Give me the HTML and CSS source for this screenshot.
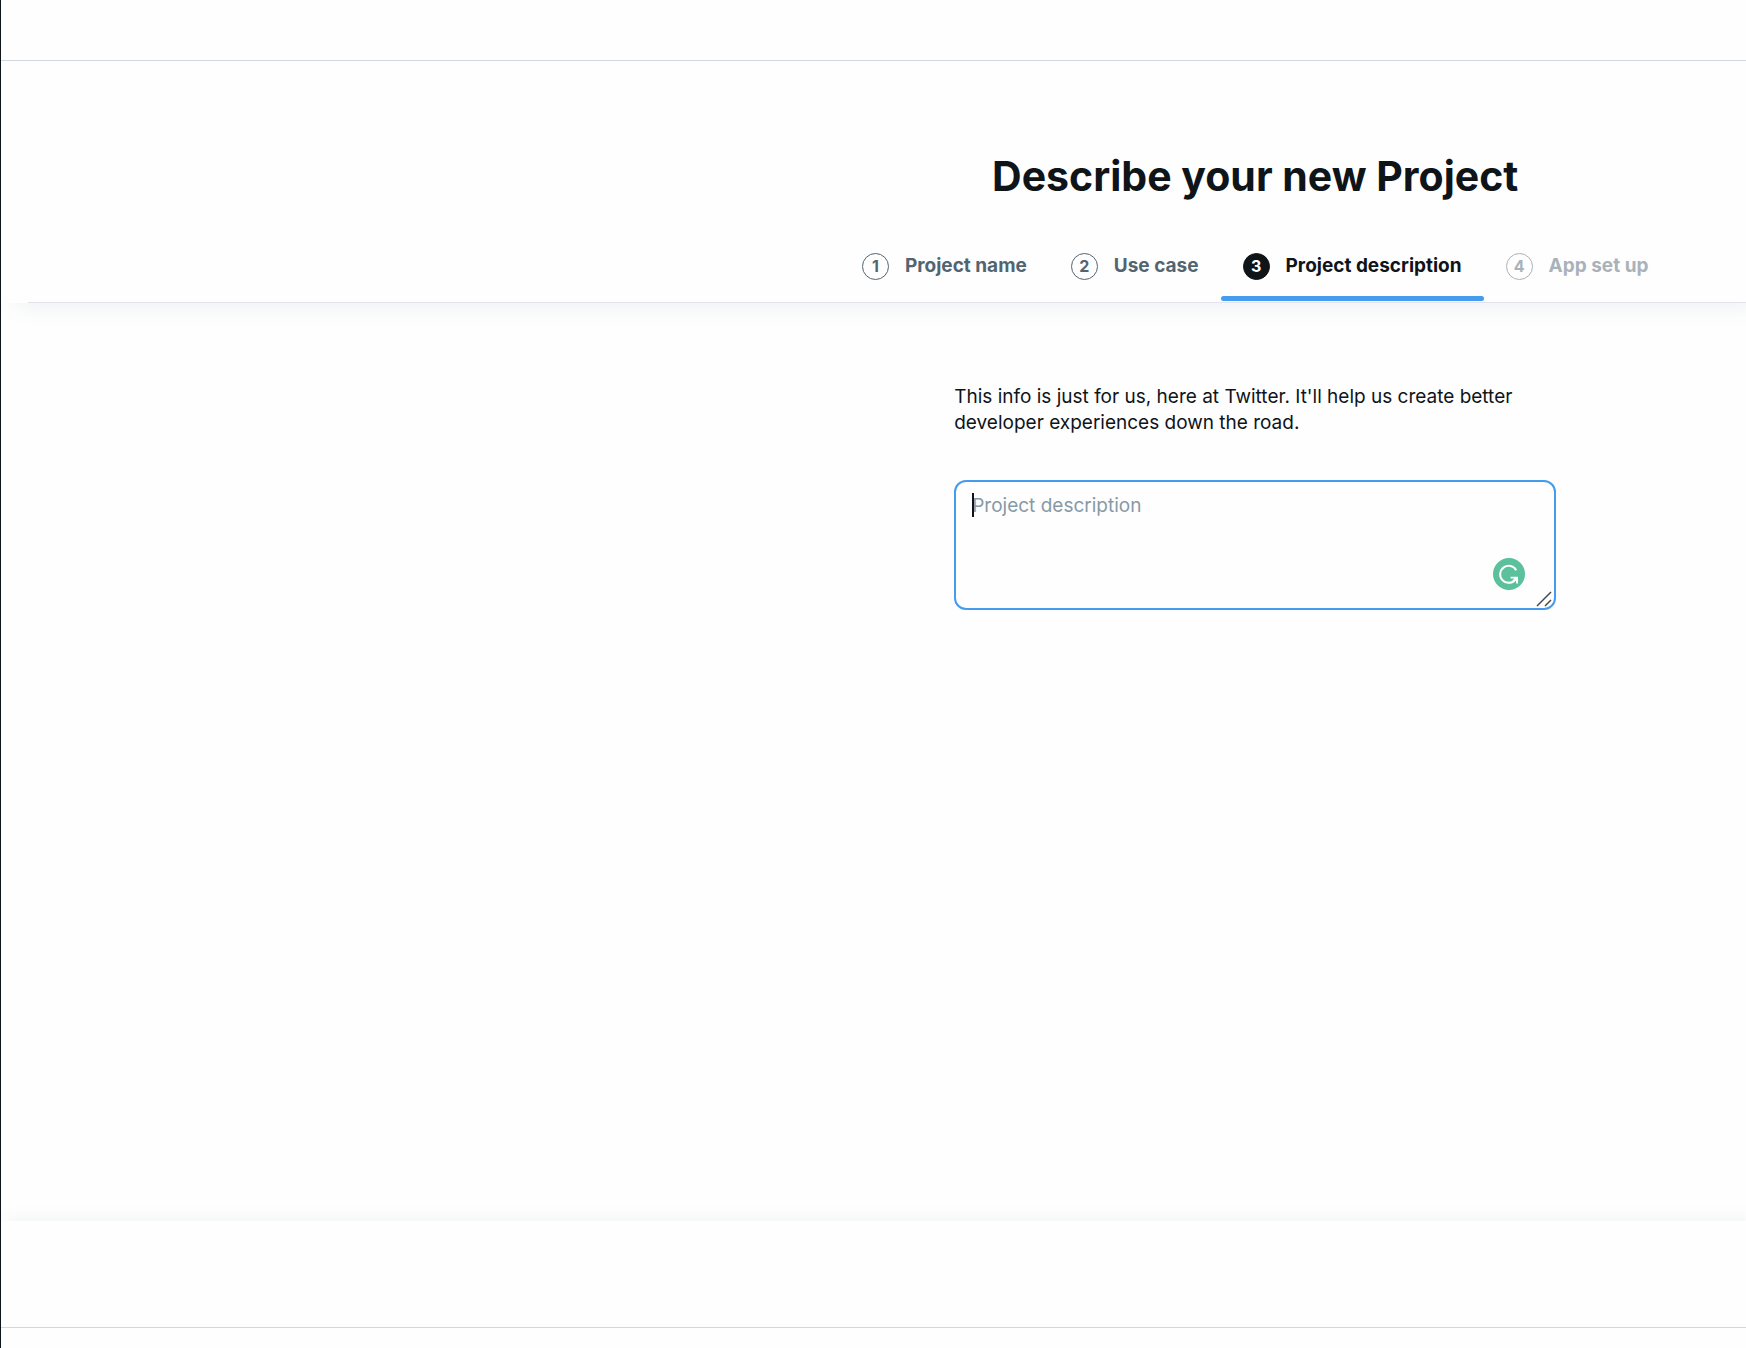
FILE: index.html
```html
<!DOCTYPE html>
<html lang="en">
<head>
<meta charset="utf-8">
<meta name="viewport" content="width=device-width, initial-scale=1">
<title>Describe your new Project</title>
<link rel="stylesheet" href="styles.css">
</head>
<body>
<div class="app">
  <div class="topbar"></div>
  <header class="masthead">
    <div class="column">
      <h1 class="title">Describe your new Project</h1>
      <nav class="steps">
        <a class="step" href="#name"><span class="badge">1</span>Project name</a>
        <a class="step" href="#use-case"><span class="badge">2</span>Use case</a>
        <a class="step step-current" href="#description" aria-current="step"><span class="badge">3</span>Project description</a>
        <a class="step step-disabled" href="#app" aria-disabled="true"><span class="badge">4</span>App set up</a>
      </nav>
    </div>
  </header>
  <main class="content">
    <form class="column form">
      <label class="intro" for="description">This info is just for us, here at Twitter. It'll help us create better developer experiences down the road.</label>
      <div class="field">
        <textarea class="input" id="description" placeholder="Project description"></textarea>
        <span class="caret"></span>
        <button class="assistant" type="button" aria-label="Writing assistant">
          <svg viewBox="0 0 32 32" width="32" height="32" aria-hidden="true">
            <circle cx="16" cy="16" r="16" fill="#5bc09c"/>
            <path d="M23.2 12.4A8.5 8.5 0 1 0 22 22" fill="none" stroke="#fff" stroke-width="2"/>
            <path d="M17.6 18.8h7.4v7l-2-.6v-2.6l-2.4 1.6-1-1.6 1.6-2h-3.6z" fill="#fff"/>
          </svg>
        </button>
        <svg class="grip" viewBox="0 0 16 16" width="16" height="16" aria-hidden="true">
          <path d="M1 15 15 1M9 15l6-6" fill="none" stroke="#4a4a4a" stroke-width="1.5"/>
        </svg>
      </div>
    </form>
  </main>
  <footer class="actions"></footer>
  <div class="bottom"></div>
</div>
</body>
</html>
```
FILE: styles.css
```css
* {
  box-sizing: border-box;
}

body {
  margin: 0;
  background: #fefefe;
  color: #0f1419;
  font-family: Inter, "Liberation Sans", sans-serif;
  font-size: 19px;
  line-height: 26px;
}

.app {
  display: flex;
  flex-direction: column;
  min-height: 100vh;
  border-left: 1px solid #0f1419;
  overflow: hidden;
}

.topbar {
  position: relative;
  z-index: 1;
  height: 61px;
  border-bottom: 1px solid #cfd9de;
  background: #fefefe;
}

.masthead,
.content {
  display: grid;
  grid-template-columns: 7fr 9fr;
}

.masthead {
  position: relative;
  padding-top: 88px;
  padding-bottom: 2px;
  background: #fefefe;
  box-shadow: 12px 8px 20px -4px rgba(101, 119, 134, 0.1);
}

/* hairline under the steps, inset from the left edge */
.masthead::after {
  content: "";
  position: absolute;
  left: 27px;
  right: 0;
  bottom: 0;
  height: 1px;
  background: #e1e5e9;
}

.column {
  grid-column: 2;
  display: flex;
  flex-direction: column;
  align-items: center;
}

.title {
  margin: 0;
  font-size: 41px;
  line-height: 54px;
  font-weight: 700;
  white-space: nowrap;
}

.steps {
  display: flex;
  margin-top: 28px;
}

.step {
  position: relative;
  display: flex;
  align-items: center;
  gap: 16px;
  height: 70px;
  padding: 0 22px;
  color: #536471;
  font-weight: 700;
  text-decoration: none;
  white-space: nowrap;
}

.step-current {
  color: #0f1419;
}

.step-current::after {
  content: "";
  position: absolute;
  left: 0;
  right: 0;
  bottom: 0;
  height: 5px;
  border-radius: 3px;
  background: #459bec;
}

.step-disabled {
  color: #aab2b9;
}

.badge {
  display: flex;
  align-items: center;
  justify-content: center;
  width: 27px;
  height: 27px;
  border: 1px solid currentColor;
  border-radius: 50%;
  font-size: 16px;
}

.step-current .badge {
  background: #0f1419;
  border-color: #0f1419;
  color: #fff;
}

.content {
  flex: 1;
  padding-top: 81px;
  align-content: start;
}

.form {
  justify-self: center;
  align-items: stretch;
  gap: 44px;
  width: 100%;
  max-width: 602px;
}

.field {
  position: relative;
  display: flex;
}

.input {
  width: 100%;
  height: 130px;
  padding: 11px 16px;
  border: 2px solid #459bec;
  border-radius: 12px;
  background: transparent;
  color: inherit;
  font: inherit;
  outline: none;
  resize: none;
}

.input::placeholder {
  color: #8899a6;
}

.caret {
  position: absolute;
  left: 18px;
  top: 13px;
  width: 2px;
  height: 24px;
  background: #0f1419;
}

.assistant {
  position: absolute;
  right: 31px;
  bottom: 20px;
  width: 32px;
  height: 32px;
  padding: 0;
  border: 0;
  background: none;
}

.assistant svg,
.grip {
  display: block;
}

.grip {
  position: absolute;
  right: 4px;
  bottom: 3px;
  pointer-events: none;
}

.actions {
  height: 107px;
  border-bottom: 1px solid #cfd9de;
  background: #fefefe;
  box-shadow: 6px -4px 16px -2px rgba(101, 119, 134, 0.09);
}

.bottom {
  position: relative;
  height: 20px;
  background: #fefefe;
}
```
